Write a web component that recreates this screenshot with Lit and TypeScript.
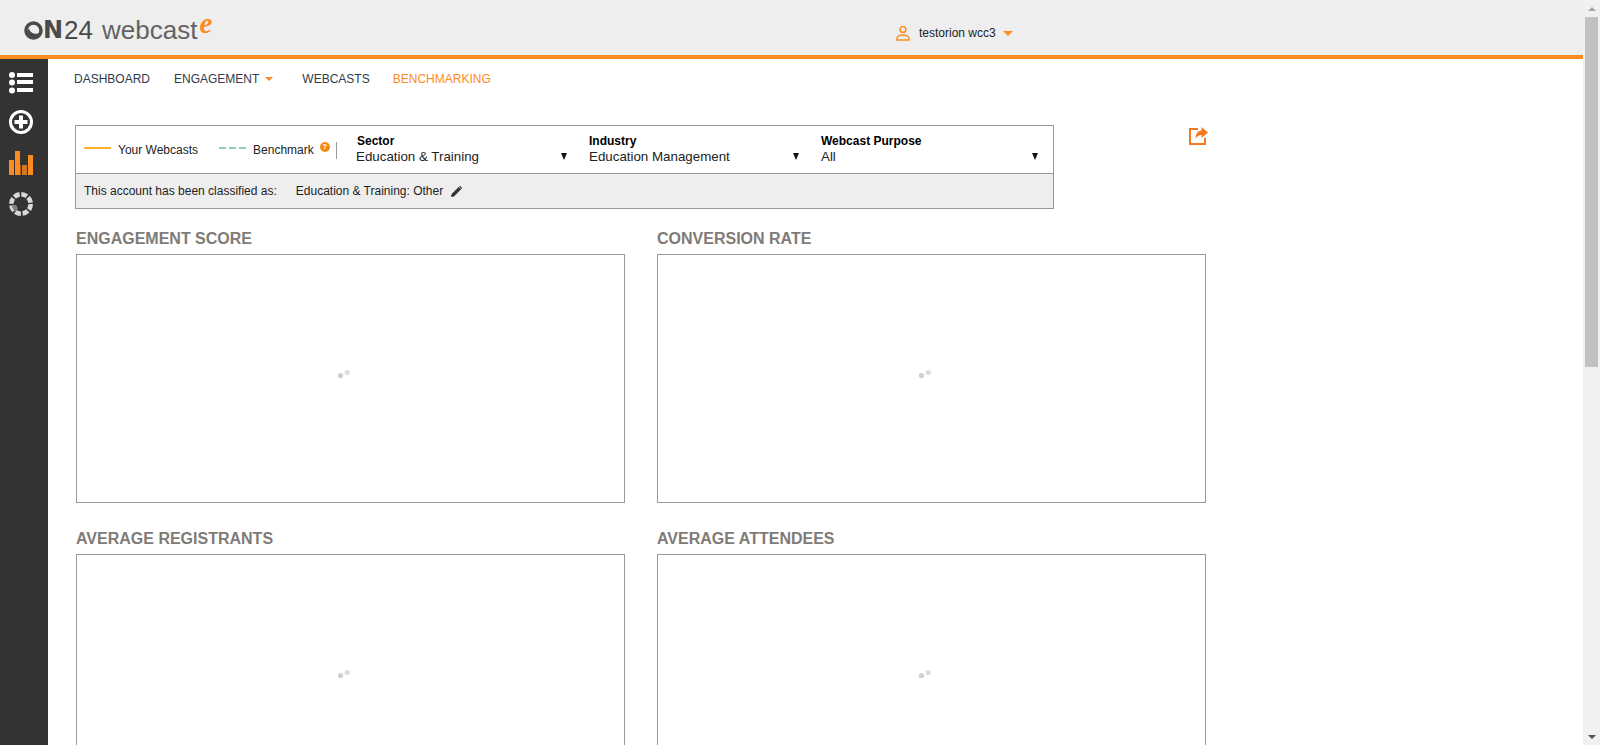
import { LitElement, html, css } from 'lit';
import { customElement } from 'lit/decorators.js';

const charts = ['ENGAGEMENT SCORE', 'CONVERSION RATE', 'AVERAGE REGISTRANTS', 'AVERAGE ATTENDEES'];

const selects = [
  { label: 'Sector', value: 'Education & Training' },
  { label: 'Industry', value: 'Education Management' },
  { label: 'Webcast Purpose', value: 'All' },
];

@customElement('app-root')
export class AppRoot extends LitElement {
  static styles = css`
    :host {
      display: flex;
      height: 745px;
      overflow: hidden;
      background: #fff;
      font-family: 'Liberation Sans', Arial, sans-serif;
      font-size: 12px;
      color: #222;
    }

    .main {
      flex: 1;
      min-width: 0;
      display: flex;
      flex-direction: column;
    }

    /* header */
    .header {
      flex: none;
      height: 55px;
      display: flex;
      background: #eeeeee;
      border-bottom: 4px solid #fc8b22;
    }
    .logo {
      width: 896px;
      padding-left: 24px;
      display: flex;
      align-items: flex-start;
      box-sizing: border-box;
    }
    .logo svg {
      margin-top: 21px;
    }
    .on24-n {
      margin: 17px 0 0 0;
      font-family: 'DejaVu Sans', sans-serif;
      font-size: 24px;
      line-height: 27px;
      font-weight: 700;
      letter-spacing: 1px;
      color: #4a4a4a;
    }
    .on24-num {
      margin: 16px 0 0 0;
      font-size: 26px;
      line-height: 28px;
      color: #4a4a4a;
    }
    .webcast {
      margin: 15px 0 0 9px;
      font-size: 26px;
      line-height: 30px;
      color: #636363;
    }
    .e {
      margin: 11px 0 0 2px;
      font-family: 'Liberation Serif', serif;
      font-style: italic;
      font-weight: 700;
      font-size: 29px;
      line-height: 24px;
      color: #fc8b22;
    }
    .user {
      display: flex;
      align-items: center;
      margin-top: 14px;
      height: 38px;
      color: #222;
    }
    .user span {
      margin: 0 7px 0 8px;
    }
    .caret {
      width: 0;
      height: 0;
      border-left: 5px solid transparent;
      border-right: 5px solid transparent;
      border-top: 5px solid #fc8b22;
    }

    /* sidebar */
    .body {
      flex: 1;
      min-height: 0;
      display: flex;
    }
    .sidebar {
      flex: none;
      width: 48px;
      background: #333333;
      display: flex;
      flex-direction: column;
      gap: 16px;
      padding: 13px 0 0 9px;
      box-sizing: border-box;
    }
    .sidebar svg {
      display: block;
    }
    .sidebar .bars {
      margin-top: 1px;
    }
    .sidebar .ring {
      margin-top: 1px;
    }

    /* nav */
    .content {
      flex: 1;
      min-width: 0;
    }
    .nav {
      display: flex;
      align-items: center;
      gap: 24px;
      height: 38px;
      padding: 1px 0 0 26px;
      box-sizing: border-box;
      color: #2f3a4a;
    }
    .nav .active {
      margin-left: -1px;
      color: #fc8b22;
    }
    .nav .with-caret {
      display: flex;
      align-items: center;
      gap: 6px;
      margin-right: 5px;
    }
    .nav .caret {
      border-left-width: 4px;
      border-right-width: 4px;
      border-top-width: 4px;
    }

    /* filter box */
    .toolbar {
      display: flex;
      justify-content: space-between;
      align-items: flex-start;
      width: 1133px;
      margin: 28px 0 0 27px;
    }
    .filters {
      width: 979px;
      height: 84px;
      box-sizing: border-box;
      border: 1px solid #999;
    }
    .filter-row {
      display: flex;
      height: 48px;
      box-sizing: border-box;
      border-bottom: 1px solid #999;
    }
    .legend {
      display: flex;
      align-items: center;
      flex: none;
      width: 280px;
      box-sizing: border-box;
      padding: 1px 0 0 8px;
      color: #222;
    }
    .line {
      width: 27px;
      height: 2px;
      margin: -5px 7px 0 0;
      background: #fdb02c;
    }
    .line.dash {
      margin-left: 21px;
      background: repeating-linear-gradient(90deg, #93cdb4 0 7px, transparent 7px 10px);
    }
    .help {
      width: 10px;
      height: 10px;
      margin: -6px 0 0 6px;
      border-radius: 50%;
      background: #f08a12;
      color: #fff;
      font-size: 8px;
      font-weight: 700;
      line-height: 10px;
      text-align: center;
    }
    .sep {
      width: 1px;
      height: 17px;
      margin: 0 0 0 6px;
      background: #999;
    }
    .select {
      position: relative;
      flex: none;
      width: 232px;
      padding-top: 8px;
      box-sizing: border-box;
    }
    .select b {
      display: block;
      padding-left: 1px;
      line-height: 14px;
      color: #000;
    }
    .select span {
      display: block;
      margin-top: 1px;
      font-size: 13.333px;
      line-height: 16px;
      color: #222;
    }
    .select + .select span {
      padding-left: 1px;
    }
    .select i {
      position: absolute;
      left: 205px;
      top: 27px;
      width: 0;
      height: 0;
      border-left: 3.5px solid transparent;
      border-right: 3.5px solid transparent;
      border-top: 7px solid #111;
    }
    .select:last-child i {
      left: 212px;
    }
    .classified {
      display: flex;
      align-items: center;
      height: 34px;
      padding-left: 8px;
      background: #eeeeee;
      color: #222;
    }
    .classified .value {
      margin-left: 19px;
    }
    .classified svg {
      margin-left: 8px;
    }
    .share {
      margin-top: 2px;
    }

    /* charts */
    .charts {
      display: grid;
      grid-template-columns: 549px 549px;
      column-gap: 32px;
      row-gap: 25px;
      margin: 19px 0 0 28px;
    }
    .chart h2 {
      margin: 0;
      height: 26px;
      font-size: 16px;
      line-height: 22px;
      font-weight: 700;
      color: #807b77;
    }
    .plot {
      height: 249px;
      box-sizing: border-box;
      border: 1px solid #999;
      display: flex;
      align-items: center;
      justify-content: center;
    }

    /* scrollbar */
    .scrollbar {
      flex: none;
      width: 17px;
      display: flex;
      flex-direction: column;
      align-items: center;
      background: #f1f1f1;
    }
    .scrollbar .btn {
      flex: none;
      height: 17px;
      display: flex;
      align-items: center;
      justify-content: center;
    }
    .scrollbar .thumb {
      flex: none;
      width: 13px;
      height: 350px;
      background: #c1c1c1;
    }
    .scrollbar .rest {
      flex: 1;
    }
    .up {
      border-left: 4px solid transparent;
      border-right: 4px solid transparent;
      border-bottom: 4px solid #a3a3a3;
    }
    .down {
      border-left: 4px solid transparent;
      border-right: 4px solid transparent;
      border-top: 4px solid #505050;
    }
  `;

  renderSidebar() {
    return html`
      <div class="sidebar">
        <svg width="24" height="22" viewBox="0 0 24 22" fill="#fff">
          <circle cx="3" cy="3" r="3" />
          <circle cx="3" cy="10.500" r="3" />
          <circle cx="3" cy="18.500" r="3" />
          <rect x="8" y="1" width="16" height="4" />
          <rect x="8" y="8" width="16" height="4" />
          <rect x="8" y="16" width="16" height="4" />
        </svg>
        <svg width="24" height="24" viewBox="0 0 24 24">
          <circle cx="12" cy="12" r="10.500" fill="none" stroke="#fff" stroke-width="3" />
          <path d="M10 5.500h4V10h4.500v4H14v4.500h-4V14H5.500v-4H10z" fill="#fff" />
        </svg>
        <svg class="bars" width="24" height="24" viewBox="0 0 24 24" fill="#fc8b22">
          <rect x="0" y="9" width="5" height="15" />
          <rect x="6" y="0" width="5" height="24" />
          <rect x="11" y="14" width="1" height="10" fill="#a85f1c" />
          <rect x="13" y="14" width="5" height="10" fill="#d07a24" />
          <rect x="19" y="4" width="5" height="20" />
        </svg>
        <svg class="ring" width="24" height="24" viewBox="0 0 24 24" fill="none">
          <circle cx="12" cy="12" r="9.700" stroke="#d9d9d9" stroke-width="4.600" stroke-dasharray="5.900 1.720" />
          <path d="M2.200 13.500l4.800-.5 2 3.500-3 3.500z" fill="#808080" />
        </svg>
      </div>
    `;
  }

  renderFilters() {
    return html`
      <div class="filters">
        <div class="filter-row">
          <div class="legend">
            <div class="line"></div>
            Your Webcasts
            <div class="line dash"></div>
            Benchmark
            <div class="help">?</div>
            <div class="sep"></div>
          </div>
          ${selects.map(
            (s) => html`
              <div class="select">
                <b>${s.label}</b>
                <span>${s.value}</span>
                <i></i>
              </div>
            `
          )}
        </div>
        <div class="classified">
          This account has been classified as:
          <span class="value">Education &amp; Training: Other</span>
          <svg width="11" height="11" viewBox="0 0 11 11" fill="#333">
            <path d="M0 11l.6-3L7.700.900l2.400 2.400L3 10.400zM8.400.200c.3-.3.700-.3 1 0l1.400 1.400c.3.3.3.7 0 1l-.3.300L8.100.500z" />
          </svg>
        </div>
      </div>
    `;
  }

  render() {
    return html`
      <div class="main">
        <div class="header">
          <div class="logo">
            <svg width="19" height="19" viewBox="0 0 19 19" fill="none">
              <circle cx="9.500" cy="9.500" r="7.500" stroke="#4a4a4a" stroke-width="3.500" />
              <path d="M5 7c.5 3.500 3 5.500 7 5.500 2 0 4-.6 5-1.500-1 4-4 6-7.500 6S3 15 3 11z" fill="#4a4a4a" />
              <path d="M6 8c1 3 3.500 4.500 7 4" stroke="#eeeeee" stroke-width="0.800" />
            </svg>
            <span class="on24-n">N</span>
            <span class="on24-num">24</span>
            <span class="webcast">webcast</span>
            <span class="e">e</span>
          </div>
          <div class="user">
            <svg width="15" height="15" viewBox="0 0 15 15" fill="none" stroke="#fc8b22" stroke-width="1.500">
              <circle cx="7" cy="3.500" r="2.900" />
              <path d="M1 14v-1.500c0-2 2.700-3.500 6-3.500s6 1.500 6 3.500V14z" />
            </svg>
            <span>testorion wcc3</span>
            <div class="caret"></div>
          </div>
        </div>
        <div class="body">
          ${this.renderSidebar()}
          <div class="content">
            <div class="nav">
              <div>DASHBOARD</div>
              <div class="with-caret">ENGAGEMENT <div class="caret"></div></div>
              <div>WEBCASTS</div>
              <div class="active">BENCHMARKING</div>
            </div>
            <div class="toolbar">
              ${this.renderFilters()}
              <svg class="share" width="19" height="18" viewBox="0 0 19 18" fill="none">
                <path d="M9 2H1v15h15v-6" stroke="#f5791f" stroke-width="2" />
                <path d="M12.500 0l6.500 5.500-6.500 5.500V8C10 8 8 9 6.500 12c0-5 2-8 6-8.500z" fill="#f5791f" />
              </svg>
            </div>
            <div class="charts">
              ${charts.map(
                (title) => html`
                  <div class="chart">
                    <h2>${title}</h2>
                    <div class="plot">
                      <svg width="30" height="30" viewBox="0 0 30 30" fill="#cfcfcf">
                        <circle cx="4.500" cy="11.500" r="2.600" />
                        <circle cx="11.200" cy="8.500" r="2.600" fill="#dcdcdc" />
                      </svg>
                    </div>
                  </div>
                `
              )}
            </div>
          </div>
        </div>
      </div>
      <div class="scrollbar">
        <div class="btn"><div class="up"></div></div>
        <div class="thumb"></div>
        <div class="rest"></div>
        <div class="btn"><div class="down"></div></div>
      </div>
    `;
  }
}
